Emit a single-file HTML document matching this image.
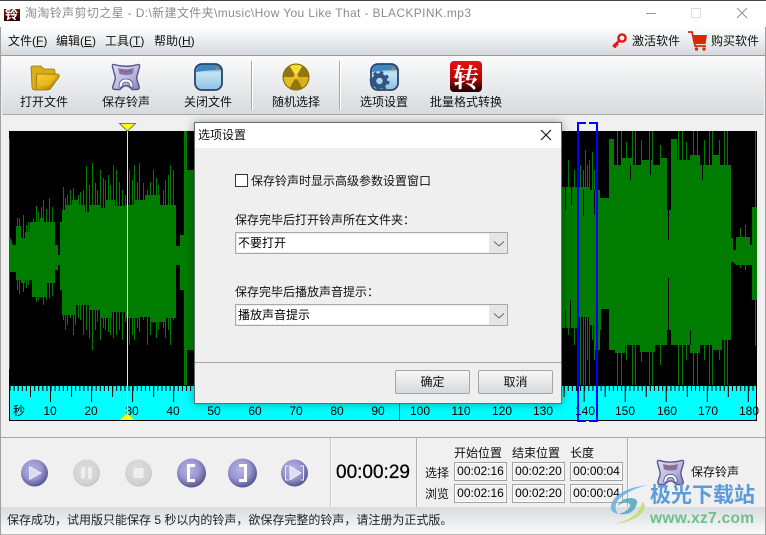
<!DOCTYPE html>
<html lang="zh"><head><meta charset="utf-8"><title>淘淘铃声剪切之星</title>
<style>
*{box-sizing:border-box}
html,body{margin:0;padding:0;width:766px;height:535px;overflow:hidden;background:#f0f0f0}
body{position:relative;font:12px/16px "Liberation Sans","Noto Sans CJK SC",sans-serif;color:#111}
.a{position:absolute}
.t{position:absolute;white-space:nowrap;line-height:16px}
.box{position:absolute;width:53px;height:19px;border:1px solid #a3a3a3;outline:1px solid #fff;outline-offset:-2px;background:#f0f0f0;text-align:center;line-height:17px;font-size:12px;color:#000}
.btn{position:absolute;top:370px;width:75px;height:24px;border:1px solid #a5a5a5;border-radius:2px;background:linear-gradient(#f7f7f7,#d5d9dc);text-align:center;line-height:22px;color:#111}
.combo{position:absolute;left:235px;width:273px;height:22px;border:1px solid #a8a8a8;box-shadow:inset 0 0 0 1px #ececec;background:#fff;line-height:20px;padding-left:2px;color:#000}
.combo i{position:absolute;right:0;top:0;width:18px;height:20px;background:#e6e6e6}
svg{position:absolute;overflow:visible}
</style></head><body>

<svg width="0" height="0" style="left:0;top:0">
<defs>
<linearGradient id="pg" x1="0" y1="0" x2="1" y2="1"><stop offset="0" stop-color="#dcdcf0"/><stop offset=".55" stop-color="#bdbae0"/><stop offset="1" stop-color="#8582b8"/></linearGradient>
<radialGradient id="ball" cx=".42" cy=".38" r=".7"><stop offset="0" stop-color="#b7b3e2"/><stop offset=".5" stop-color="#9a97d0"/><stop offset=".82" stop-color="#62629e"/><stop offset="1" stop-color="#3f3f72"/></radialGradient>
<radialGradient id="gball" cx=".45" cy=".4" r=".7"><stop offset="0" stop-color="#dedede"/><stop offset=".7" stop-color="#d2d2d2"/><stop offset="1" stop-color="#b9b9b9"/></radialGradient>
<linearGradient id="gold" x1="0" y1="0" x2="1" y2="1"><stop offset="0" stop-color="#f8d840"/><stop offset=".55" stop-color="#d9a60c"/><stop offset="1" stop-color="#9a7406"/></linearGradient>
<linearGradient id="blu" x1="0" y1="0" x2="0" y2="1"><stop offset="0" stop-color="#3f8fc4"/><stop offset=".35" stop-color="#c4e4f6"/><stop offset="1" stop-color="#8fc2e4"/></linearGradient>
<symbol id="sv" viewBox="0 0 30 28">
<path d="M3 1.500Q1 1 1.500 4L4 13Q4.500 15 4 17L2 23Q1 26.500 4 26.500L9 26.500Q15 19 21 26.500L26 26.500Q29 26.500 28 23L26 17Q25.500 15 26 13L28.500 4Q29 1 27 1.500Q15 5 3 1.500Z" fill="url(#pg)" stroke="#56548c" stroke-width="1.400"/>
<path d="M7 5Q15 8 23 5L21.500 11Q15 13 8.500 11Z" fill="#7b78b2"/>
<circle cx="11" cy="8" r="1.100" fill="#d8453a"/><circle cx="15" cy="8.700" r="1.100" fill="#d8453a"/><circle cx="19" cy="8" r="1.100" fill="#d8453a"/>
<path d="M8 24Q8 16 15 16Q22 16 22 24L19 24Q19 19 15 19Q11 19 11 24Z" fill="#fff" stroke="#56548c" stroke-width=".8"/>
</symbol>
</defs></svg>

<!-- title bar -->
<div class="a" style="left:0;top:0;width:766px;height:27px;background:#fff;border-top:1px solid #444"></div>
<div class="a" style="left:4px;top:9px;width:16px;height:12px;background:linear-gradient(#8a1010,#200)"></div>
<div class="t" style="left:5px;top:7px;color:#fff;font-weight:bold;font-size:13px">铃</div>
<div class="t" style="left:25px;top:5px;color:#8c8c8c;letter-spacing:.37px">淘淘铃声剪切之星 - D:\新建文件夹\music\How You Like That - BLACKPINK.mp3</div>
<div class="a" style="left:646px;top:13px;width:10px;height:1px;background:#999"></div>
<div class="a" style="left:691px;top:8px;width:10px;height:10px;border:1px solid #ddd"></div>
<svg style="left:736px;top:7px" width="12" height="12"><path d="M1 1L11 11M11 1L1 11" stroke="#909090" stroke-width="1" fill="none"/></svg>

<!-- menu -->
<div class="a" style="left:0;top:27px;width:766px;height:29px;background:linear-gradient(#fff,#d6dadd);border-bottom:1px solid #9a9a9a"></div>
<div class="t" style="left:8px;top:33px;">文件(<u>F</u>)</div>
<div class="t" style="left:56px;top:33px;">编辑(<u>E</u>)</div>
<div class="t" style="left:105px;top:33px;">工具(<u>T</u>)</div>
<div class="t" style="left:154px;top:33px;">帮助(<u>H</u>)</div>
<svg style="left:611px;top:33px" width="16" height="16"><circle cx="11" cy="5" r="3.600" fill="none" stroke="#e81212" stroke-width="2.400"/><path d="M8.500 7.500L2 13.500M3 12.500L5 14.500M5 10.500L7 12.500" stroke="#e81212" stroke-width="2.400" fill="none"/></svg>
<div class="t" style="left:632px;top:33px;">激活软件</div>
<svg style="left:687px;top:30px" width="22" height="22"><path d="M1 2H5L8 16H19" stroke="#d42a10" stroke-width="1.800" fill="none"/><path d="M5.500 5H20L18.500 14H7.500Z" fill="#dc2800"/><circle cx="9.500" cy="19" r="1.700" fill="#d42a10"/><circle cx="17" cy="19" r="1.700" fill="#d42a10"/></svg>
<div class="t" style="left:711px;top:33px;">购买软件</div>

<!-- toolbar -->
<div class="a" style="left:2px;top:56px;width:762px;height:59px;background:linear-gradient(#fbfbfb,#d7dbde);border-bottom:1px solid #a8a8a8;border-radius:0 0 2px 2px"></div>
<div class="a" style="left:251px;top:61px;width:1px;height:49px;background:#aaa;box-shadow:1px 0 #fff"></div>
<div class="a" style="left:339px;top:61px;width:1px;height:49px;background:#aaa;box-shadow:1px 0 #fff"></div>

<svg style="left:29px;top:64px" width="31" height="28"><path d="M2 4Q2 2 4 2H12L15 5H24Q26 5 26 8V14L8 26H6Q3 26 3 23Z" fill="#d9ae18" stroke="#96760c" stroke-width=".8"/><path d="M8 10H28Q31 10 30 13L22 24Q21 26 18 26H9Q7 26 7 23Z" fill="url(#gold)" stroke="#8f700c" stroke-width=".8"/><path d="M10 12H27L20 22H10Z" fill="#efc92a" opacity=".55"/></svg>
<svg style="left:111px;top:63px" width="30" height="28"><use href="#sv"/></svg>
<svg style="left:194px;top:63px" width="29" height="28"><rect x="1" y="1" width="27" height="26" rx="7" fill="url(#blu)" stroke="#26436e" stroke-width="1.800"/><path d="M2 9Q3 2 9 2H20Q26 2 27 7Q14 7 2 9Z" fill="#3a88bd"/><circle cx="23" cy="6" r="1.500" fill="#e8742a"/></svg>
<svg style="left:282px;top:63px" width="28" height="28"><circle cx="14" cy="14" r="13.500" fill="#7f6200"/><circle cx="14" cy="14" r="12.500" fill="#c09a12"/><path d="M14 14L7.800 3.300Q14 0 20.200 3.300Z" fill="#f2dc3a"/><path d="M14 14H1.600Q1.800 21 7.800 24.700Z" fill="#e0be22"/><path d="M14 14H26.400Q26.200 21 20.200 24.700Z" fill="#d8b41c"/><path d="M14 14L7.800 24.700Q14 28 20.200 24.700ZM14 14H1.600Q1.800 7 7.800 3.300ZM14 14H26.400Q26.200 7 20.200 3.300Z" fill="#94760e"/><circle cx="14" cy="14" r="2.500" fill="#e6c520"/></svg>
<svg style="left:370px;top:63px" width="29" height="28"><rect x="1" y="1" width="27" height="26" rx="7" fill="url(#blu)" stroke="#26436e" stroke-width="1.800"/><path d="M2 9Q3 2 9 2H20Q26 2 27 7Q14 7 2 9Z" fill="#3a88bd"/><circle cx="23" cy="6" r="1.500" fill="#e8742a"/><circle cx="9.500" cy="18" r="5.500" fill="none" stroke="#33547f" stroke-width="4.500"/><circle cx="9.500" cy="18" r="8.500" fill="none" stroke="#33547f" stroke-width="3" stroke-dasharray="3.300 3.400"/></svg>
<div class="a" style="left:450px;top:61px;width:32px;height:31px;border-radius:4px;background:linear-gradient(#e81010,#b50808 55%,#150000)"></div>
<div class="t" style="left:450px;top:61px;width:32px;height:31px;line-height:31px;text-align:center;color:#fff;font:bold 26px/31px 'Noto Serif CJK SC','Noto Sans CJK SC',serif">转</div>

<div class="t" style="left:20px;top:94px;">打开文件</div>
<div class="t" style="left:102px;top:94px;">保存铃声</div>
<div class="t" style="left:184px;top:94px;">关闭文件</div>
<div class="t" style="left:272px;top:94px;">随机选择</div>
<div class="t" style="left:360px;top:94px;">选项设置</div>
<div class="t" style="left:430px;top:94px;">批量格式转换</div>

<!-- waveform -->
<svg style="left:0;top:0" width="766" height="535">
<rect x="9" y="131" width="748" height="255" fill="#000"/>
<rect x="9.500" y="386" width="747" height="34" fill="#00ffff"/>
<g fill="#007c00">
<polygon points="10,237 13,245 16,245 16,226 21,226 21,238 25,238 25,232 30,232 30,222 40,222 40,218 44,218 44,222 55,222 55,245 58,245 58,255 60,255 60,222 62,222 62,210 66,210 66,205 72,205 72,200 78,200 78,205 85,205 85,212 90,212 90,205 100,205 100,208 105,208 105,200 115,200 115,206 125,206 125,205 135,205 135,200 145,200 145,195 160,195 160,205 176,205 176,246 180,246 180,235 184,235 184,131 187,131 187,170 194,170 194,350 187,350 187,385 184,385 184,290 180,290 180,265 176,265 176,318 165,318 165,322 150,322 150,317 140,317 140,318 125,318 125,312 112,312 112,318 100,318 100,310 90,310 90,305 75,305 75,315 62,315 62,290 60,290 60,265 58,265 58,270 55,270 55,283 46,283 46,297 32,297 32,280 25,280 25,283 21,283 21,280 16,280 16,272 10,272"/>
<polygon points="561,187 577,187 577,218 579,218 579,187 590,187 590,190 600,190 600,198 609,198 609,139 614,139 614,165 622,165 622,158 632,158 632,165 642,165 642,160 652,160 652,165 660,165 660,158 667,158 667,210 671,210 671,139 677,139 677,160 690,160 690,155 700,155 700,165 712,165 712,155 720,155 720,165 731,165 731,238 733,238 733,250 736,250 736,237 750,237 750,245 752,245 752,207 757,207 757,300 752,300 752,265 736,265 733,262 731,262 731,340 722,340 722,350 712,350 712,345 700,345 700,353 690,353 690,345 671,345 671,330 667,330 667,345 655,345 655,352 640,352 640,345 625,345 625,353 615,353 615,350 609,350 609,309 600,309 600,350 594,350 594,325 590,325 590,317 578,317 578,328 561,328"/>
<rect x="9" y="139" width="1" height="230"/>
</g>
<path stroke="#007c00" stroke-width="1" fill="none" d="M17.500 218V290M19.500 218V294M23.500 215V292M26.500 225V288M28.500 222V285M33.500 218V297M36.500 206V302M38.500 212V300M41.500 207V298M43.500 200V305M46.500 209V300M49.500 198V298M52.500 207V296M63.500 187V320M65.500 198V330M67.500 195V325M70.500 190V318M73.500 188V335M75.500 200V325M78.500 195V318M80.500 192V320M83.500 190V335M86.500 166V330M89.500 185V338M92.500 163V350M95.500 183V330M97.500 190V322M100.500 170V340M103.500 178V328M105.500 180V330M108.500 175V332M110.500 185V335M113.500 165V338M116.500 170V335M119.500 182V330M122.500 190V340M125.500 195V322M127.500 185V330M129.500 170V345M132.500 180V335M134.500 165V340M137.500 182V328M139.500 163V332M143.500 183V320M147.500 190V345M150.500 182V335M153.500 170V323M156.500 178V338M158.500 185V330M163.500 190V328M165.500 180V338M168.500 175V330M170.500 165V345M173.500 170V320M580.500 165V385M583.500 170V385M585.500 150V385M587.500 165V360M589.500 160V385M592.500 152V340M594.500 170V360M596.500 166V385M600.500 200V330M617.500 131V385M621.500 131V385M626.500 142V360M632.500 131V385M635.500 131V385M641.500 140V362M649.500 131V385M652.500 131V385M660.500 145V365M678.500 131V385M682.500 131V385M686.500 142V360M693.500 131V385M697.500 131V385M704.500 140V360M709.500 131V385M712.500 131V385M719.500 140V360M724.500 131V385M727.500 131V385M755.500 131V346M740.500 228V268M745.500 225V270M574.500 170V345M568.500 160V335"/>
<path stroke="#000" stroke-width="1" fill="none" d="M565.500 187V210M571.500 187V205M565.500 310V328M570.500 300V328M668.500 278V345M668.500 158V240M650.500 160V175M630.500 165V180M690.500 345V330M702.500 165V180M583.500 190V216M594.500 190V215M596.500 300V320"/>
<!-- ruler -->
<line x1="9.500" y1="388.500" x2="756" y2="388.500" stroke="#000" stroke-width="5" stroke-dasharray="1 3.105"/>
<line x1="30" y1="391.500" x2="756" y2="391.500" stroke="#000" stroke-width="11" stroke-dasharray="1 40.050"/>
<line x1="50" y1="394" x2="756" y2="394" stroke="#000" stroke-width="16" stroke-dasharray="1 40.050"/>
<line x1="399.500" y1="404" x2="399.500" y2="420" stroke="#c81010"/>
<path d="M9.500 386V420.500H756.500V386" stroke="#000" fill="none"/>
<g font-family="Liberation Sans,sans-serif" font-size="12" fill="#000" text-anchor="middle">
<text x="19" y="415" font-family="Liberation Sans,Noto Sans CJK SC,sans-serif">秒</text>
<text x="50" y="415">10</text><text x="91" y="415">20</text><text x="132" y="415">30</text><text x="173" y="415">40</text><text x="214" y="415">50</text><text x="255" y="415">60</text><text x="296" y="415">70</text><text x="337" y="415">80</text><text x="378" y="415">90</text><text x="420" y="415">100</text><text x="461" y="415">110</text><text x="502" y="415">120</text><text x="543" y="415">130</text><text x="585" y="415">140</text><text x="625" y="415">150</text><text x="667" y="415">160</text><text x="708" y="415">170</text><text x="749" y="415">180</text>
</g>
<line x1="127.500" y1="131" x2="127.500" y2="420" stroke="#ffff00"/>
<polygon points="119.500,123.500 135.500,123.500 127.500,131" fill="#ffff00" stroke="#555" stroke-width=".8"/>
<polygon points="120,420 134,420 127,413" fill="#ffff00"/>
<path d="M586 123H578V421H586M589 123H597V421H589" fill="none" stroke="#0000ff" stroke-width="2"/>
</svg>

<!-- bottom panel -->
<div class="a" style="left:0;top:437px;width:766px;height:1px;background:#a8a8a8"></div>
<div class="a" style="left:330px;top:438px;width:1px;height:69px;background:#c4c4c4;box-shadow:1px 0 #fafafa"></div>
<div class="a" style="left:416px;top:438px;width:1px;height:69px;background:#b0b0b0;box-shadow:1px 0 #fafafa"></div>
<div class="a" style="left:627px;top:438px;width:1px;height:69px;background:#b0b0b0;box-shadow:1px 0 #fafafa"></div>

<svg style="left:20px;top:458px" width="290" height="30">
<circle cx="14.500" cy="15" r="13.500" fill="url(#ball)"/><path d="M9.500 8.500L21 15L9.500 21.500Z" fill="#dcdcf4" stroke="#fff" stroke-width=".6"/>
<circle cx="66.500" cy="15" r="13.500" fill="url(#gball)"/><rect x="61" y="9" width="4" height="12" rx="2" fill="#eee"/><rect x="68" y="9" width="4" height="12" rx="2" fill="#eee"/>
<circle cx="118.500" cy="15" r="13.500" fill="url(#gball)"/><rect x="113.500" y="10" width="10" height="10" rx="1.500" fill="#eee"/>
<circle cx="171.500" cy="15" r="14.500" fill="url(#ball)"/><path d="M175 7.500H168.500V22.500H175" fill="none" stroke="#fff" stroke-width="3"/>
<circle cx="222.500" cy="15" r="14.500" fill="url(#ball)"/><path d="M219 7.500H225.500V22.500H219" fill="none" stroke="#fff" stroke-width="3"/>
<circle cx="274.500" cy="15" r="13.500" fill="url(#ball)"/><path d="M270 8L281 15L270 22Z" fill="#dcdcf4" stroke="#fff" stroke-width=".7"/><path d="M268.500 8H265.500V22H268.500M280.500 8H283.500V22H280.500" fill="none" stroke="#eee" stroke-width="1"/>
</svg>

<div class="t" style="left:336px;top:463px;font-size:19px;line-height:20px;color:#000;-webkit-text-stroke:.25px #000">00:00:29</div>

<div class="t" style="left:454px;top:445px;">开始位置</div>
<div class="t" style="left:512px;top:445px;">结束位置</div>
<div class="t" style="left:570px;top:445px;">长度</div>
<div class="t" style="left:425px;top:465px;">选择</div>
<div class="t" style="left:425px;top:486px;">浏览</div>
<div class="box" style="left:454px;top:462px">00:02:16</div>
<div class="box" style="left:512px;top:462px">00:02:20</div>
<div class="box" style="left:570px;top:462px">00:00:04</div>
<div class="box" style="left:454px;top:484px">00:02:16</div>
<div class="box" style="left:512px;top:484px">00:02:20</div>
<div class="box" style="left:570px;top:484px">00:00:04</div>

<svg style="left:656px;top:459px" width="29" height="27"><use href="#sv"/></svg>
<div class="t" style="left:691px;top:464px;">保存铃声</div>

<!-- status -->
<div class="a" style="left:0;top:507px;width:766px;height:28px;background:linear-gradient(#d8dcdf,#fbfbfb)"></div>
<div class="t" style="left:7px;top:512px;color:#222">保存成功&#xFF0C;试用版只能保存 5 秒以内的铃声&#xFF0C;欲保存完整的铃声&#xFF0C;请注册为正式版。</div>
<div class="a" style="left:0;top:534px;width:766px;height:1px;background:#bbb"></div>
<div class="a" style="left:765px;top:27px;width:1px;height:508px;background:#a0a0a0"></div>
<div class="a" style="left:0;top:27px;width:1px;height:508px;background:#a0a0a0"></div>

<!-- watermark -->
<svg style="left:606px;top:484px" width="46" height="42" opacity=".9">
<path d="M42 1Q14 4 6 18Q2 28 12 30Q5 20 18 11Q28 4 42 1Z" fill="#6fb2e2"/>
<path d="M12 30Q26 32 30 22Q34 14 24 14Q14 15 12 22Q16 18 22 19Q26 21 22 25Q18 29 12 30Z" fill="#58aebc"/>
<path d="M36 18Q34 34 8 40Q30 38 38 26Q40 20 36 18Z" fill="#c4de66"/>
</svg>
<div class="t" style="left:650px;top:483px;font:bold 21px/26px 'Liberation Sans','Noto Sans CJK SC',sans-serif;color:#5b9bd8">极光下载站</div>
<div class="t" style="left:650px;top:509px;font:bold 15.500px/20px 'Liberation Sans',sans-serif;color:#6cc08c;letter-spacing:.3px">www.xz7.com</div>

<!-- dialog -->
<div class="a" style="left:194px;top:122px;width:368px;height:282px;background:#efefef;border:1px solid #5f6f73;box-shadow:0 0 9px rgba(0,0,0,.35)"></div>
<div class="a" style="left:195px;top:123px;width:366px;height:25px;background:#fff"></div>
<div class="t" style="left:198px;top:127px;color:#111">选项设置</div>
<svg style="left:540px;top:129px" width="12" height="12"><path d="M1 1L11 11M11 1L1 11" stroke="#111" stroke-width="1.100" fill="none"/></svg>
<div class="a" style="left:235px;top:174px;width:13px;height:13px;border:1px solid #333;background:#fff"></div>
<div class="t" style="left:251px;top:173px;">保存铃声时显示高级参数设置窗口</div>
<div class="t" style="left:235px;top:212px;">保存完毕后打开铃声所在文件夹&#xFF1A;</div>
<div class="combo" style="top:232px">不要打开<i></i></div>
<svg style="left:493px;top:240px" width="12" height="8"><path d="M1 1.500L6 6L11 1.500" stroke="#666" fill="none"/></svg>
<div class="t" style="left:235px;top:284px;">保存完毕后播放声音提示&#xFF1A;</div>
<div class="combo" style="top:304px">播放声音提示<i></i></div>
<svg style="left:493px;top:312px" width="12" height="8"><path d="M1 1.500L6 6L11 1.500" stroke="#666" fill="none"/></svg>
<div class="a" style="left:195px;top:362px;width:366px;height:1px;background:#a8a8a8"></div>
<div class="btn" style="left:395px">确定</div>
<div class="btn" style="left:478px">取消</div>
</body></html>
